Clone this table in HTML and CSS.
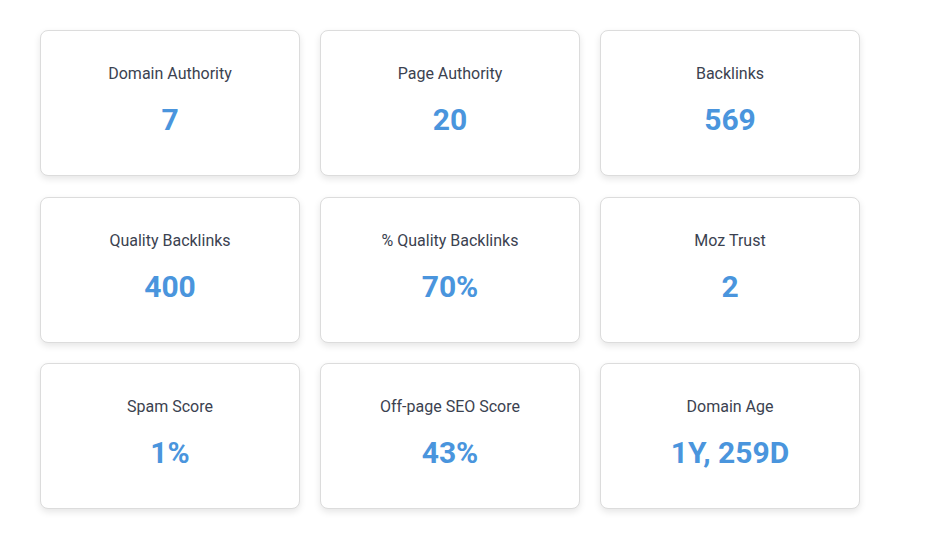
FILE: index.html
```html
<!DOCTYPE html>
<html lang="en">
<head>
<meta charset="utf-8">
<title>SEO Metrics</title>
<link rel="stylesheet" href="styles.css">
</head>
<body>
<main class="grid">
  <div class="card"><div class="label">Domain Authority</div><div class="value">7</div></div>
  <div class="card"><div class="label">Page Authority</div><div class="value">20</div></div>
  <div class="card"><div class="label">Backlinks</div><div class="value">569</div></div>
  <div class="card"><div class="label">Quality Backlinks</div><div class="value">400</div></div>
  <div class="card"><div class="label">% Quality Backlinks</div><div class="value">70%</div></div>
  <div class="card"><div class="label">Moz Trust</div><div class="value">2</div></div>
  <div class="card"><div class="label">Spam Score</div><div class="value">1%</div></div>
  <div class="card"><div class="label">Off-page SEO Score</div><div class="value">43%</div></div>
  <div class="card"><div class="label">Domain Age</div><div class="value">1Y, 259D</div></div>
</main>
</body>
</html>
```
FILE: styles.css
```css
html, body {
  margin: 0;
  padding: 0;
  background: #ffffff;
  font-family: Roboto, "Liberation Sans", sans-serif;
}
.grid {
  display: grid;
  grid-template-columns: repeat(3, 260px);
  grid-auto-rows: 146px;
  column-gap: 20px;
  row-gap: 20.5px;
  padding: 30px 40px;
}
.card {
  box-sizing: border-box;
  border: 1px solid #dcdcdc;
  border-radius: 8px;
  background: #fff;
  box-shadow: 0 3px 7px rgba(0, 0, 0, 0.1);
  display: flex;
  flex-direction: column;
  align-items: center;
  padding-top: 33px;
}
.label {
  font-size: 16px;
  line-height: 19px;
  color: #3b4250;
}
.value {
  margin-top: 19px;
  font-size: 30px;
  line-height: 36px;
  font-weight: 700;
  color: #4a95dd;
}
```
